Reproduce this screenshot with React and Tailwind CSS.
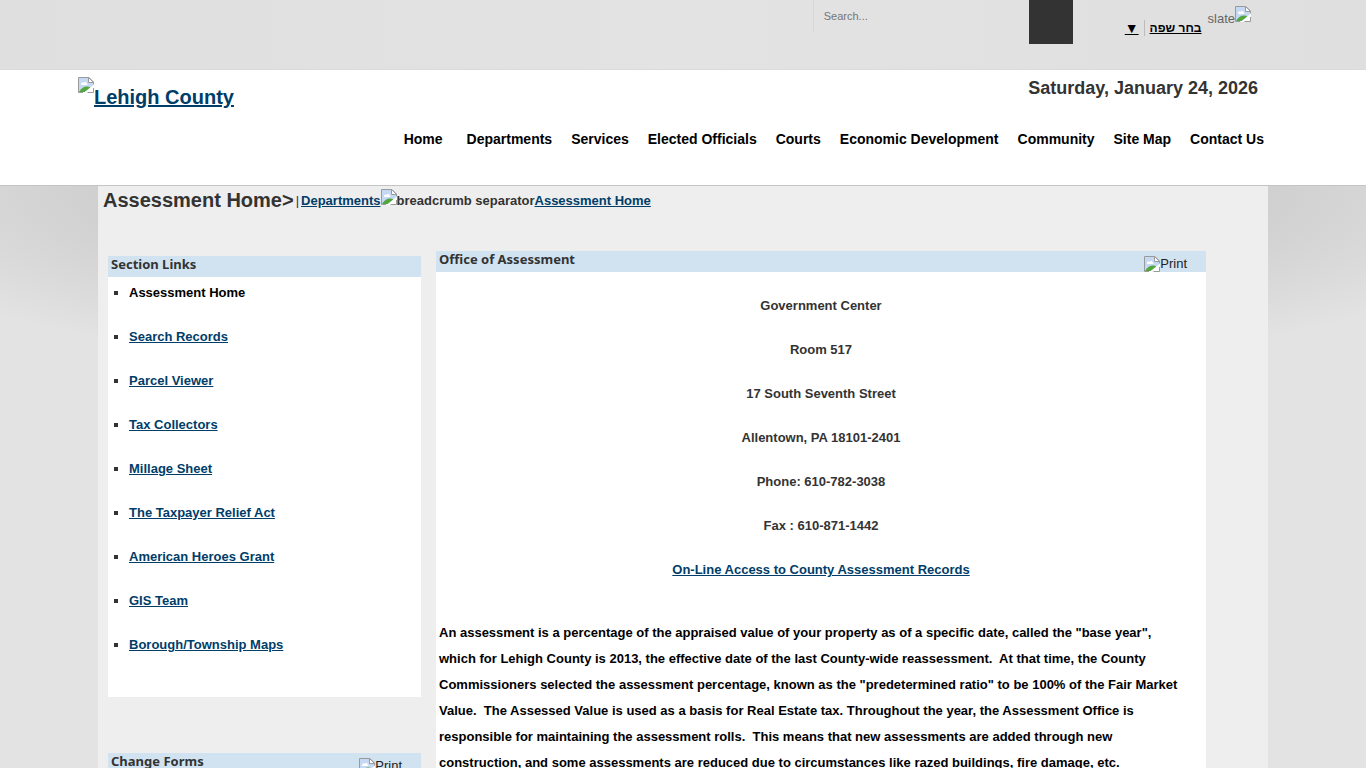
/**
 * Lehigh County - Assessment department home page
 */
import React from "react";

const NAV_ITEMS = [
  "Departments",
  "Services",
  "Elected Officials",
  "Courts",
  "Economic Development",
  "Community",
  "Site Map",
  "Contact Us",
];

const SECTION_LINKS = [
  "Search Records",
  "Parcel Viewer",
  "Tax Collectors",
  "Millage Sheet",
  "The Taxpayer Relief Act",
  "American Heroes Grant",
  "GIS Team",
  "Borough/Township Maps",
];

const ADDRESS_LINES = [
  "Government Center",
  "Room 517",
  "17 South Seventh Street",
  "Allentown, PA 18101-2401",
  "Phone: 610-782-3038",
  "Fax : 610-871-1442",
];

/** Placeholder icon shown where a picture is missing */
function MissingImage() {
  return (
    <svg className="w-4 h-4 shrink-0" viewBox="0 0 16 16" aria-hidden="true">
      <path d="M0.5 0.5H11L15.5 5V15.5H0.5Z" fill="#fff" />
      <path d="M1 1H10.5V5.5H15V9L6 15H1Z" fill="#c5d9f5" />
      <path d="M3 7c0-1.3 1.6-2 2.4-1C6 4.400 8.600 4.600 8.600 6.500c1 0 1.200 1.500 0 1.500H4C3.300 8 3 7.600 3 7z" fill="#fff" />
      <path d="M1 15C3 11 6.500 9 10 9.500c1.200.2 2 .8 2.500 1.500L7 15z" fill="#54a63e" />
      <path d="M16 7.500V10L8 16H5.500Z" fill="#fff" />
      <path d="M0.5 15.500V0.500H11L15.500 5V7.500M0.500 15.500H5M15.500 11V15.500H9.500" fill="none" stroke="#9a9a9a" />
      <path d="M10.500 0.500V5.500H15.500Z" fill="#fff" stroke="#9a9a9a" />
    </svg>
  );
}

/** Blue title strip on top of each box */
function BoxTitle({ children, print }) {
  return (
    <div className="flex justify-between h-[21px] px-[3px] bg-[#d1e3f0] overflow-hidden">
      <h2 className="font-['Noto_Sans',sans-serif] text-[13px] leading-[17px] font-bold">
        {children}
      </h2>
      {print && (
        <a href="#print" className="flex items-start mt-[5px] mr-4 text-[13px] leading-4 text-[#222]">
          <MissingImage />
          Print
        </a>
      )}
    </div>
  );
}

function TopBar() {
  return (
    <div className="h-[70px] border-b border-[#dadada] bg-linear-to-r from-[#dfdfdf] via-[#e3e3e3] to-[#dfdfdf]">
      <div className="max-w-[1170px] mx-auto flex justify-end pr-[17px]">
        <form className="flex items-start" onSubmit={(e) => e.preventDefault()}>
          <input
            type="search"
            aria-label="Search"
            placeholder="Search..."
            className="w-[216px] h-8 pl-[10px] border-l border-[#d8d8d8] bg-transparent text-[11px] placeholder:text-[#757575]"
          />
          <button type="submit" aria-label="Search" className="w-11 h-11 bg-[#333]" />
        </form>
        <div className="flex items-start ml-[52px]">
          <a href="#language" className="flex mt-5 text-xs leading-4 font-bold text-black">
            <span className="text-sm leading-4 underline">▼</span>
            <span className="mx-[5px] border-l border-[#bbb]" />
            <span className="underline" dir="rtl">בחר שפה</span>
          </a>
          <span className="flex items-start ml-[6px] mt-[6px] text-[13px] text-[#666]">
            <span className="mt-[5px] leading-4">slate</span>
            <MissingImage />
          </span>
        </div>
      </div>
    </div>
  );
}

function Header() {
  return (
    <header className="h-[116px] bg-white border-b border-[#c4c4c4]">
      <div className="max-w-[1210px] mx-auto">
        <div className="flex justify-between pt-[7px]">
          <a href="#home" className="flex items-start text-xl font-bold text-[#003d69]">
            <MissingImage />
            <span className="mt-[6px] underline">Lehigh County</span>
          </a>
          <p className="mr-[30px] text-lg leading-[22px] font-bold">Saturday, January 24, 2026</p>
        </div>
        <nav className="flex justify-end mt-[18px] mr-6 gap-[19px] text-sm leading-5 font-bold text-black">
          <a href="#home" className="mr-[5px]">Home</a>
          {NAV_ITEMS.map((item) => (
            <a key={item} href="#nav">{item}</a>
          ))}
        </nav>
      </div>
    </header>
  );
}

function Breadcrumb() {
  return (
    <div className="flex items-start h-[65px] pl-[5px] pt-[3px] text-[13px] leading-6 font-bold">
      <h1 className="mr-0.5 text-xl leading-[22px]">Assessment Home&gt;</h1>
      <span className="mr-0.5 font-normal">|</span>
      <a href="#departments" className="text-[#003d69] underline">Departments</a>
      <MissingImage />
      <span>breadcrumb separator</span>
      <a href="#assessment" className="text-[#003d69] underline">Assessment Home</a>
    </div>
  );
}

function Sidebar() {
  return (
    <aside className="w-[313px] shrink-0 mt-[5px]">
      <BoxTitle>Section Links</BoxTitle>
      <ul className="h-[420px] pl-[21px] pt-[5px] bg-white list-[square] text-[13px] leading-[22px] font-bold">
        <li className="mb-[22px] text-black marker:text-[#333]">Assessment Home</li>
        {SECTION_LINKS.map((link) => (
          <li key={link} className="mb-[22px]">
            <a href="#section" className="text-[#003d69] underline">{link}</a>
          </li>
        ))}
      </ul>
      <div className="mt-14">
        <BoxTitle print>Change Forms</BoxTitle>
      </div>
    </aside>
  );
}

function Content() {
  return (
    <main className="flex-1 mr-[62px]">
      <BoxTitle print>Office of Assessment</BoxTitle>
      <div className="px-[3px] pt-[23px] pb-8 bg-white text-[13px] leading-[22px] font-bold">
        <div className="flex flex-col items-center gap-[22px]">
          {ADDRESS_LINES.map((line) => (
            <p key={line}>{line}</p>
          ))}
          <a href="#records" className="text-[#003d69] underline">
            On-Line Access to County Assessment Records
          </a>
        </div>
        <p className="mt-[39px] pr-5 leading-[26px] text-black">
          An assessment is a percentage of the appraised value of your property as of a specific
          date, called the "base year", which for Lehigh County is 2013, the effective date of the
          last County-wide reassessment.&nbsp; At that time, the County Commissioners selected the
          assessment percentage, known as the "predetermined ratio" to be 100% of the Fair Market
          Value.&nbsp; The Assessed Value is used as a basis for Real Estate tax. Throughout the
          year, the Assessment Office is responsible for maintaining the assessment rolls.&nbsp;
          This means that new assessments are added through new construction, and some assessments
          are reduced due to circumstances like razed buildings, fire damage, etc.
        </p>
      </div>
    </main>
  );
}

export default function App() {
  return (
    <div className="h-screen overflow-hidden flex flex-col bg-[#e2e2e2] font-['Liberation_Sans',sans-serif] text-[#333]">
      <TopBar />
      <Header />
      <div className="flex-1 min-h-0 bg-[radial-gradient(ellipse_900px_200px_at_50%_0,#c8c8c8,#cdcdcd_60%,#e3e3e3)]">
        <div className="max-w-[1170px] h-full mx-auto bg-[#eee]">
          <Breadcrumb />
          <div className="flex gap-[15px] pl-[10px]">
            <Sidebar />
            <Content />
          </div>
        </div>
      </div>
    </div>
  );
}
